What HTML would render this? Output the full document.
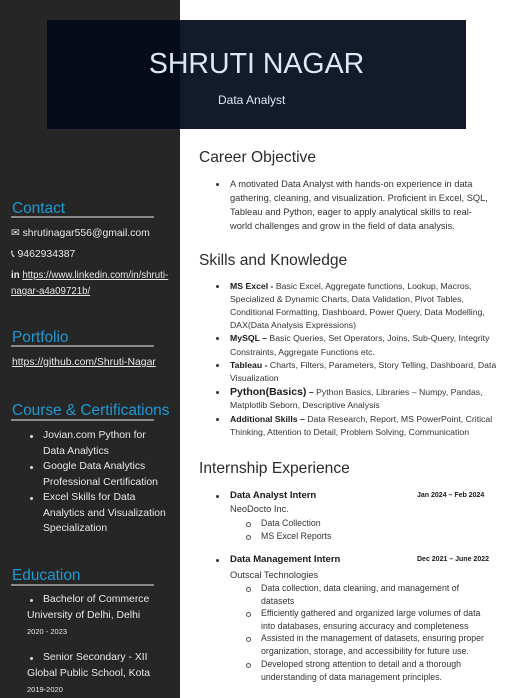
<!DOCTYPE html>
<html><head><meta charset="utf-8"><style>
*{margin:0;padding:0}
body{width:505px;height:698px;position:relative;overflow:hidden;background:#fff;font-family:"Liberation Sans",sans-serif}
.side{position:absolute;left:0;top:0;width:180px;height:698px;background:#262626}
.l{position:absolute;white-space:nowrap;line-height:14px}
.s{color:#e8e8e8;font-size:10.4px}
.h{color:#1d9ad3;font-size:15.4px;line-height:18px}
.rule{position:absolute;left:11px;width:143px;height:2px;background:#8a8a8a}
.r{color:#333;font-size:9.3px}
.k{font-size:8.7px}
.x{font-size:8.8px}
.rh{color:#2b2b2b;font-size:15.6px;line-height:18px}
.b{font-weight:bold;color:#1a1a1a}
.dot{position:absolute;width:3px;height:3px;border-radius:50%}
.o{position:absolute;width:3px;height:3px;border-radius:50%;border:0.8px solid #555}
u{text-decoration:underline}
</style></head><body>
<div class="side"></div>
<div style="position:absolute;left:47px;top:20px;width:133px;height:109px;background:#050b19"></div>
<div style="position:absolute;left:180px;top:20px;width:286px;height:109px;background:#131a2b"></div>
<div class="l" style="left:47px;width:419px;text-align:center;top:46px;line-height:36px;font-size:28.5px;color:#dce8f6">SHRUTI NAGAR</div>
<div class="l" style="left:218px;top:93px;font-size:12px;color:#dce8f6">Data Analyst</div>

<div class="l h" style="left:12px;top:200px">Contact</div>
<div class="rule" style="top:216px"></div>
<div class="l s" style="left:11px;top:227px">✉ shrutinagar556@gmail.com</div>
<div class="l s" style="left:11px;top:248px">📞︎ 9462934387</div>
<div class="l s" style="left:11px;top:269px;font-size:9.7px"><b>in</b> <u>https://www.linkedin.com/in/shruti-</u></div>
<div class="l s" style="left:11px;top:285px;font-size:9.7px"><u>nagar-a4a09721b/</u></div>

<div class="l h" style="left:12px;top:329px">Portfolio</div>
<div class="rule" style="top:345px"></div>
<div class="l s" style="left:12px;top:356px"><u>https://github.com/Shruti-Nagar</u></div>

<div class="l h" style="left:12px;top:402px">Course &amp; Certifications</div>
<div class="rule" style="top:419px"></div>
<div class="dot" style="background:#ddd;left:30px;top:435px"></div>
<div class="l s" style="left:43px;top:429px">Jovian.com Python for</div>
<div class="l s" style="left:43px;top:445px">Data Analytics</div>
<div class="dot" style="background:#ddd;left:30px;top:466px"></div>
<div class="l s" style="left:43px;top:460px">Google Data Analytics</div>
<div class="l s" style="left:43px;top:476px">Professional Certification</div>
<div class="dot" style="background:#ddd;left:30px;top:497px"></div>
<div class="l s" style="left:43px;top:491px">Excel Skills for Data</div>
<div class="l s" style="left:43px;top:507px">Analytics and Visualization</div>
<div class="l s" style="left:43px;top:522px">Specialization</div>

<div class="l h" style="left:12px;top:567px">Education</div>
<div class="rule" style="top:584px"></div>
<div class="dot" style="background:#ddd;left:30px;top:599px"></div>
<div class="l s" style="left:43px;top:593px">Bachelor of Commerce</div>
<div class="l s" style="left:27px;top:609px">University of Delhi, Delhi</div>
<div class="l s" style="left:27px;top:625px;font-size:7.5px">2020 - 2023</div>
<div class="dot" style="background:#ddd;left:30px;top:657px"></div>
<div class="l s" style="left:43px;top:651px">Senior Secondary - XII</div>
<div class="l s" style="left:27px;top:667px">Global Public School, Kota</div>
<div class="l s" style="left:27px;top:683px;font-size:7.5px">2019-2020</div>

<div class="l rh" style="left:199px;top:149px">Career Objective</div>
<div class="dot" style="background:#333;left:216px;top:183px"></div>
<div class="l r" style="left:230px;top:177px">A motivated Data Analyst with hands-on experience in data</div>
<div class="l r" style="left:230px;top:191px">gathering, cleaning, and visualization. Proficient in Excel, SQL,</div>
<div class="l r" style="left:230px;top:205px">Tableau and Python, eager to apply analytical skills to real-</div>
<div class="l r" style="left:230px;top:219px">world challenges and grow in the field of data analysis.</div>

<div class="l rh" style="left:199px;top:252px">Skills and Knowledge</div>
<div class="dot" style="background:#333;left:216px;top:285px"></div>
<div class="l r k" style="left:230px;top:279px"><span class="b">MS Excel -</span> Basic Excel, Aggregate functions, Lookup, Macros,</div>
<div class="l r k" style="left:230px;top:292px">Specialized &amp; Dynamic Charts, Data Validation, Pivot Tables,</div>
<div class="l r k" style="left:230px;top:305px">Conditional Formatting, Dashboard, Power Query, Data Modelling,</div>
<div class="l r k" style="left:230px;top:318px">DAX(Data Analysis Expressions)</div>
<div class="dot" style="background:#333;left:216px;top:337px"></div>
<div class="l r k" style="left:230px;top:331px"><span class="b">MySQL –</span> Basic Queries, Set Operators, Joins, Sub-Query, Integrity</div>
<div class="l r k" style="left:230px;top:345px">Constraints, Aggregate Functions etc.</div>
<div class="dot" style="background:#333;left:216px;top:364px"></div>
<div class="l r k" style="left:230px;top:358px"><span class="b">Tableau -</span> Charts, Filters, Parameters, Story Telling, Dashboard, Data</div>
<div class="l r k" style="left:230px;top:371px">Visualization</div>
<div class="dot" style="background:#333;left:216px;top:391px"></div>
<div class="l r k" style="left:230px;top:385px"><span class="b" style="font-size:10.5px">Python(Basics)</span> <span class="b">–</span> Python Basics, Libraries – Numpy, Pandas,</div>
<div class="l r k" style="left:230px;top:398px">Matplotlib Seborn, Descriptive Analysis</div>
<div class="dot" style="background:#333;left:216px;top:418px"></div>
<div class="l r k" style="left:230px;top:412px"><span class="b">Additional Skills –</span> Data Research, Report, MS PowerPoint, Critical</div>
<div class="l r k" style="left:230px;top:425px">Thinking, Attention to Detail, Problem Solving, Communication</div>

<div class="l rh" style="left:199px;top:460px">Internship Experience</div>
<div class="dot" style="background:#333;left:216px;top:495px"></div>
<div class="l r b" style="left:230px;top:489px;font-size:9.5px">Data Analyst Intern</div>
<div class="l r b" style="left:417px;top:489px;font-size:7px">Jan 2024 – Feb 2024</div>
<div class="l r" style="left:230px;top:502px">NeoDocto Inc.</div>
<div class="o" style="left:246px;top:522px"></div>
<div class="l r x" style="left:261px;top:516px">Data Collection</div>
<div class="o" style="left:246px;top:535px"></div>
<div class="l r x" style="left:261px;top:529px">MS Excel Reports</div>

<div class="dot" style="background:#333;left:216px;top:559px"></div>
<div class="l r b" style="left:230px;top:553px;font-size:9.5px">Data Management Intern</div>
<div class="l r b" style="left:417px;top:553px;font-size:7px">Dec 2021 – June 2022</div>
<div class="l r" style="left:230px;top:568px">Outscal Technologies</div>
<div class="o" style="left:246px;top:587px"></div>
<div class="l r x" style="left:261px;top:581px">Data collection, data cleaning, and management of</div>
<div class="l r x" style="left:261px;top:594px">datasets</div>
<div class="o" style="left:246px;top:612px"></div>
<div class="l r x" style="left:261px;top:606px">Efficiently gathered and organized large volumes of data</div>
<div class="l r x" style="left:261px;top:619px">into databases, ensuring accuracy and completeness</div>
<div class="o" style="left:246px;top:637px"></div>
<div class="l r x" style="left:261px;top:631px">Assisted in the management of datasets, ensuring proper</div>
<div class="l r x" style="left:261px;top:644px">organization, storage, and accessibility for future use.</div>
<div class="o" style="left:246px;top:663px"></div>
<div class="l r x" style="left:261px;top:657px">Developed strong attention to detail and a thorough</div>
<div class="l r x" style="left:261px;top:670px">understanding of data management principles.</div>
</body></html>
